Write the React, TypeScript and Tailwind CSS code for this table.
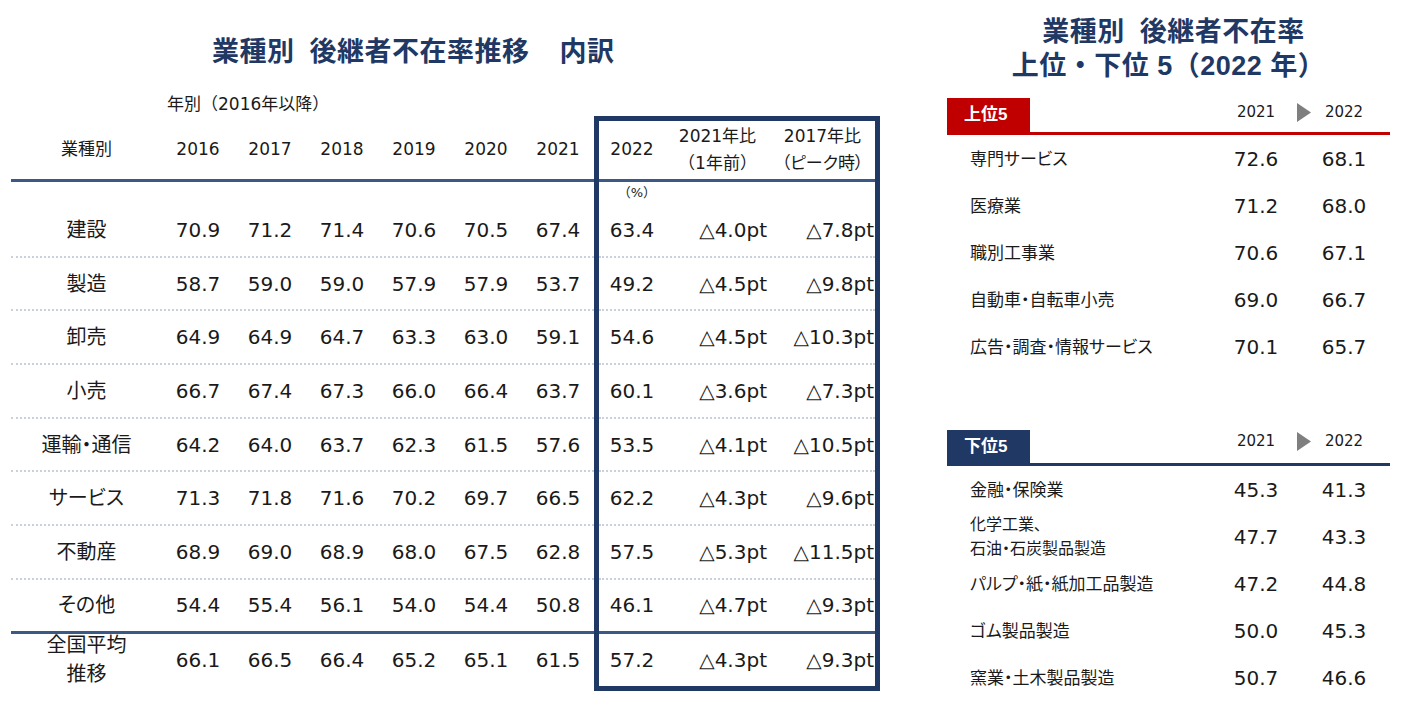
const years = ['2016', '2017', '2018', '2019', '2020', '2021']

const rows = [
  { label: '建設', v: ['70.9', '71.2', '71.4', '70.6', '70.5', '67.4'], y22: '63.4', d1: '△4.0pt', d5: '△7.8pt' },
  { label: '製造', v: ['58.7', '59.0', '59.0', '57.9', '57.9', '53.7'], y22: '49.2', d1: '△4.5pt', d5: '△9.8pt' },
  { label: '卸売', v: ['64.9', '64.9', '64.7', '63.3', '63.0', '59.1'], y22: '54.6', d1: '△4.5pt', d5: '△10.3pt' },
  { label: '小売', v: ['66.7', '67.4', '67.3', '66.0', '66.4', '63.7'], y22: '60.1', d1: '△3.6pt', d5: '△7.3pt' },
  { label: '運輸・通信', v: ['64.2', '64.0', '63.7', '62.3', '61.5', '57.6'], y22: '53.5', d1: '△4.1pt', d5: '△10.5pt' },
  { label: 'サービス', v: ['71.3', '71.8', '71.6', '70.2', '69.7', '66.5'], y22: '62.2', d1: '△4.3pt', d5: '△9.6pt' },
  { label: '不動産', v: ['68.9', '69.0', '68.9', '68.0', '67.5', '62.8'], y22: '57.5', d1: '△5.3pt', d5: '△11.5pt' },
  { label: 'その他', v: ['54.4', '55.4', '56.1', '54.0', '54.4', '50.8'], y22: '46.1', d1: '△4.7pt', d5: '△9.3pt' },
]

const avg = { v: ['66.1', '66.5', '66.4', '65.2', '65.1', '61.5'], y22: '57.2', d1: '△4.3pt', d5: '△9.3pt' }

const top5 = [
  { label: ['専門サービス'], a: '72.6', b: '68.1' },
  { label: ['医療業'], a: '71.2', b: '68.0' },
  { label: ['職別工事業'], a: '70.6', b: '67.1' },
  { label: ['自動車・自転車小売'], a: '69.0', b: '66.7' },
  { label: ['広告・調査・情報サービス'], a: '70.1', b: '65.7' },
]

const bottom5 = [
  { label: ['金融・保険業'], a: '45.3', b: '41.3' },
  { label: ['化学工業、', '石油・石炭製品製造'], a: '47.7', b: '43.3' },
  { label: ['パルプ・紙・紙加工品製造'], a: '47.2', b: '44.8' },
  { label: ['ゴム製品製造'], a: '50.0', b: '45.3' },
  { label: ['窯業・土木製品製造'], a: '50.7', b: '46.6' },
]

const rowLine = 'border-b-2 border-dotted border-[#c8d2de]'

const Arrow = () => (
  <svg width="14" height="19" viewBox="0 0 14 19" className="ml-[5px] block">
    <path d="M0 0 L14 9.5 L0 19 Z" fill="#7f7f7f" />
  </svg>
)

const RankTable = ({
  title,
  color,
  items,
  top,
}: {
  title: string
  color: 'red' | 'navy'
  items: { label: string[]; a: string; b: string }[]
  top: boolean
}) => (
  <div>
    <div
      className={
        color === 'red'
          ? 'flex h-[37px] items-start border-b-[3px] border-[#c00000] pr-[10px]'
          : 'flex h-[36px] items-start border-b-[3px] border-[#1f3864] pr-[10px]'
      }
    >
      <div
        className={
          color === 'red'
            ? "flex h-[34px] w-[83px] items-center bg-[#c00000] pl-[17px] font-['Liberation_Sans','Noto_Sans_CJK_JP',sans-serif] text-[17px] font-bold text-white"
            : "flex h-[33px] w-[83px] items-center bg-[#1f3864] pl-[17px] font-['Liberation_Sans','Noto_Sans_CJK_JP',sans-serif] text-[17px] font-bold text-white"
        }
      >
        {title}
      </div>
      <div className="flex-1" />
      <div className={top ? 'w-[72px] pt-[4px] text-center text-[15px] leading-[20px]' : 'w-[72px] pt-[1px] text-center text-[15px] leading-[20px]'}>
        2021
      </div>
      <div className={top ? 'w-[16px] shrink-0 pt-[5px]' : 'w-[16px] shrink-0 pt-[2px]'}>
        <Arrow />
      </div>
      <div className={top ? 'w-[72px] pt-[4px] text-center text-[15px] leading-[20px]' : 'w-[72px] pt-[1px] text-center text-[15px] leading-[20px]'}>
        2022
      </div>
    </div>
    {items.map((it) => (
      <div key={it.a + it.b} className="flex h-[47px] items-center pr-[10px]">
        <div className="flex-1 pl-[23px] [font-feature-settings:'palt']">
          {it.label.length === 1 ? (
            <div className="text-[17px] leading-[24px]">{it.label[0]}</div>
          ) : (
            it.label.map((l) => (
              <div key={l} className="text-[16px] leading-[24px]">
                {l}
              </div>
            ))
          )}
        </div>
        <div className="w-[72px] text-center text-[20px]">{it.a}</div>
        <div className="w-[16px]" />
        <div className="w-[72px] text-center text-[20px]">{it.b}</div>
      </div>
    ))}
  </div>
)

export default function App() {
  return (
    <div className="flex h-[718px] w-[1401px] bg-white font-['DejaVu_Sans','Noto_Sans_CJK_JP',sans-serif] text-[#1a1a1a]">
      {/* left: breakdown table */}
      <div className="w-[880px] shrink-0 pl-[11px]">
        <div className="flex h-[93px] pt-[33px] pl-[201px] font-['Liberation_Sans','Noto_Sans_CJK_JP',sans-serif] text-[27px] font-bold leading-[38px] tracking-[0.5px] text-[#1f3864]">
          <span>業種別</span>
          <span className="w-[15px]" />
          <span>後継者不在率推移</span>
          <span className="w-[30px]" />
          <span>内訳</span>
        </div>
        <div className="h-[23px] pl-[156px] text-[17px] leading-[23px]">年別（2016年以降）</div>
        <div className="flex">
          <div className="w-[583px] shrink-0">
            <div className="flex h-[66px] items-center border-b-[3px] border-[#3a5a85] pt-[5px] text-[17px]">
              <div className="w-[151px] text-center">業種別</div>
              {years.map((y) => (
                <div key={y} className="w-[72px] text-center">
                  {y}
                </div>
              ))}
            </div>
            <div className="h-[22px]" />
            {rows.map((r, i) => (
              <div
                key={r.label}
                className={
                  i < 7
                    ? `flex h-[53.7px] items-center text-[20px] ${rowLine}`
                    : 'flex h-[54px] items-center border-b-[3px] border-[#3a5a85] text-[20px]'
                }
              >
                <div className="w-[151px] text-center [font-feature-settings:'palt']">{r.label}</div>
                {r.v.map((v, j) => (
                  <div key={j} className="w-[72px] text-center">
                    {v}
                  </div>
                ))}
              </div>
            ))}
            <div className="flex h-[52px] items-center text-[20px]">
              <div className="w-[151px] text-center leading-[29px]">
                <div>全国平均</div>
                <div>推移</div>
              </div>
              {avg.v.map((v, j) => (
                <div key={j} className="w-[72px] text-center">
                  {v}
                </div>
              ))}
            </div>
          </div>

          <div className="w-[286px] shrink-0 border-[5px] border-[#1f3864]">
            <div className="flex h-[61px] items-center border-b-[3px] border-[#3a5a85] text-[17px]">
              <div className="w-[66px] text-center">2022</div>
              <div className="w-[105px] text-center leading-[27px]">
                <div>2021年比</div>
                <div>（1年前）</div>
              </div>
              <div className="w-[105px] text-center leading-[27px] [font-feature-settings:'palt']">
                <div>2017年比</div>
                <div>（ピーク時）</div>
              </div>
            </div>
            <div className="flex h-[22px] items-center">
              <div className="w-[66px] pr-[9px] text-right text-[13px]">（%）</div>
            </div>
            {rows.map((r, i) => (
              <div
                key={r.label}
                className={
                  i < 7
                    ? `flex h-[53.7px] items-center text-[20px] ${rowLine}`
                    : 'flex h-[54px] items-center border-b-[3px] border-[#3a5a85] text-[20px]'
                }
              >
                <div className="w-[66px] text-center">{r.y22}</div>
                <div className="w-[105px] pr-[3px] text-right">{r.d1}</div>
                <div className="w-[105px] pr-[1px] text-right">{r.d5}</div>
              </div>
            ))}
            <div className="flex h-[52px] items-center text-[20px]">
              <div className="w-[66px] text-center">{avg.y22}</div>
              <div className="w-[105px] pr-[3px] text-right">{avg.d1}</div>
              <div className="w-[105px] pr-[1px] text-right">{avg.d5}</div>
            </div>
          </div>
        </div>
      </div>

      {/* right: top / bottom 5 */}
      <div className="ml-[67px] w-[443px] shrink-0">
        <div className="pt-[15px] font-['Liberation_Sans','Noto_Sans_CJK_JP',sans-serif] text-[27px] font-bold leading-[34px] tracking-[0.5px] text-[#1f3864]">
          <div className="flex justify-center pl-[10px]">
            <span>業種別</span>
            <span className="w-[15px]" />
            <span>後継者不在率</span>
          </div>
          <div className="text-center">上位・下位 5（2022 年）</div>
        </div>
        <div className="mt-[15px]">
          <RankTable title="上位5" color="red" items={top5} top />
        </div>
        <div className="mt-[60px]">
          <RankTable title="下位5" color="navy" items={bottom5} top={false} />
        </div>
      </div>
    </div>
  )
}
